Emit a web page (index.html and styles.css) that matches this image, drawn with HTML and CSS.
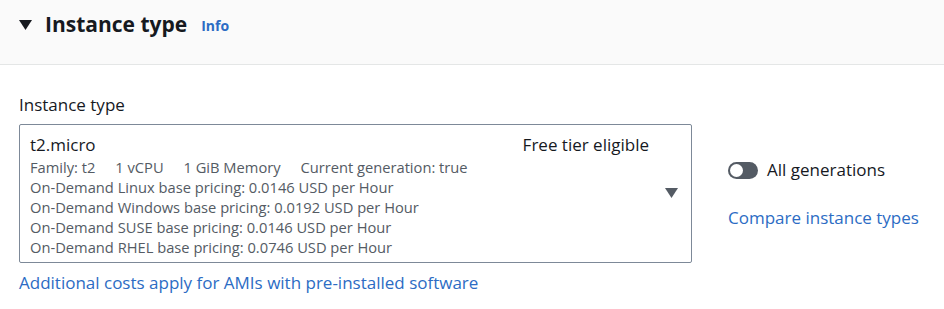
FILE: index.html
```html
<!DOCTYPE html>
<html lang="en">
<head>
    <meta charset="UTF-8">
    <meta name="viewport" content="width=device-width, initial-scale=1.0">
    <title>Instance type</title>
    <link rel="stylesheet" href="styles.css">
</head>
<body>
    <div class="panel">
        <div class="panel-header">
            <span class="collapse-icon">
                <svg width="13" height="10" viewBox="0 0 13 10"><polygon points="0,0 13,0 6.5,10" fill="#16191f"/></svg>
            </span>
            <h2>Instance type</h2>
            <a class="info" href="#">Info</a>
        </div>

        <div class="panel-body">
            <label class="field-label">Instance type</label>
            <div class="field-row">
                <div class="select-box">
                    <div class="select-main">
                        <div class="select-top">
                            <span class="select-title">t2.micro</span>
                            <span class="select-tag">Free tier eligible</span>
                        </div>
                        <div class="select-desc">
                            <div class="tags">
                                <span>Family: t2</span>
                                <span>1 vCPU</span>
                                <span>1 GiB Memory</span>
                                <span>Current generation: true</span>
                            </div>
                            <div>On-Demand Linux base pricing: 0.0146 USD per Hour</div>
                            <div>On-Demand Windows base pricing: 0.0192 USD per Hour</div>
                            <div>On-Demand SUSE base pricing: 0.0146 USD per Hour</div>
                            <div>On-Demand RHEL base pricing: 0.0746 USD per Hour</div>
                        </div>
                    </div>
                    <span class="caret">
                        <svg width="13" height="10" viewBox="0 0 13 10"><polygon points="0,0 13,0 6.5,10" fill="#545b64"/></svg>
                    </span>
                </div>

                <div class="side">
                    <div class="toggle-row">
                        <span class="toggle"><span class="knob"></span></span>
                        <span>All generations</span>
                    </div>
                    <a class="link" href="#">Compare instance types</a>
                </div>
            </div>
            <a class="link extra" href="#">Additional costs apply for AMIs with pre-installed software</a>
        </div>
    </div>
</body>
</html>
```

FILE: styles.css
```css
body {
    margin: 0;
    padding: 0;
    font-family: "Open Sans", Arial, sans-serif;
    color: #16191f;
    background-color: #fff;
}

a {
    text-decoration: none;
}

.panel-header {
    height: 65px;
    box-sizing: border-box;
    background-color: #fafafa;
    border-bottom: 1px solid #e4e6e6;
    display: flex;
    align-items: center;
    padding-left: 19px;
    padding-bottom: 12px;
}

.collapse-icon {
    display: flex;
    margin-right: 13px;
    margin-top: -3px;
}

.panel-header h2 {
    margin: 0;
    font-size: 21px;
    font-weight: 700;
    margin-top: -5px;
}

.info {
    color: #2c6cc4;
    font-weight: 700;
    font-size: 14px;
    margin-left: 14px;
    margin-top: -2px;
}

.panel-body {
    padding: 29px 19px 0 19px;
}

.field-label {
    display: block;
    font-size: 17px;
    line-height: 22px;
    margin-bottom: 8px;
}

.field-row {
    display: flex;
    align-items: flex-start;
}

.select-box {
    width: 673px;
    box-sizing: border-box;
    border: 1px solid #7d8998;
    border-radius: 2px;
    display: flex;
    align-items: center;
    padding: 8px 13px 5px 10px;
}

.select-main {
    flex: 1;
}

.select-top {
    display: flex;
    justify-content: space-between;
    font-size: 17px;
    line-height: 24px;
    padding-right: 16px;
}

.select-desc {
    font-size: 14.7px;
    line-height: 20px;
    color: #545b64;
}

.tags span {
    margin-right: 16px;
}

.caret {
    display: flex;
    margin-top: -4px;
}

.side {
    margin-left: 36px;
    padding-top: 35px;
}

.toggle-row {
    display: flex;
    align-items: center;
    font-size: 17px;
    line-height: 22px;
    gap: 9px;
}

.toggle {
    width: 30px;
    height: 17px;
    border-radius: 9px;
    background-color: #545b64;
    display: flex;
    align-items: center;
    padding: 0 2px;
    box-sizing: border-box;
}

.knob {
    width: 13px;
    height: 13px;
    border-radius: 50%;
    background-color: #fff;
}

.link {
    display: block;
    color: #2c6cc4;
    font-size: 17px;
    line-height: 22px;
}

.side .link {
    margin-top: 26px;
}

.extra {
    margin-top: 9px;
}
```
